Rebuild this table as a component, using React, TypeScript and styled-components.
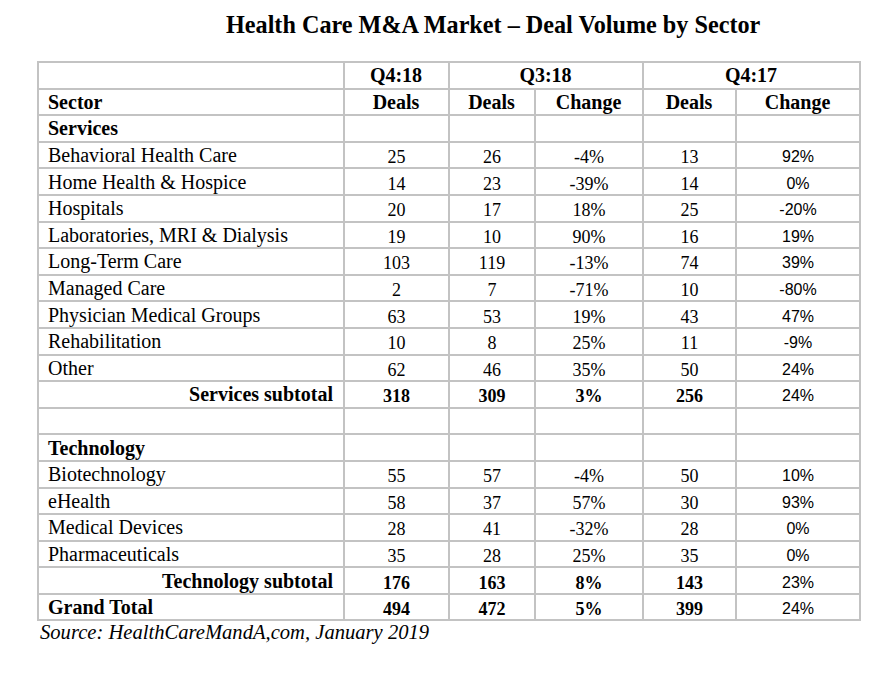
import React from 'react';
import styled, { createGlobalStyle } from 'styled-components';

const GlobalStyle = createGlobalStyle`
  body {
    margin: 0;
    background: #ffffff;
    font-family: "Liberation Serif", "Times New Roman", serif;
    color: #000;
  }
`;

const Page = styled.div`
  width: 882px;
  height: 689px;
  padding: 12px 0 0 37px;
  box-sizing: border-box;
`;

const Title = styled.h1`
  margin: 0 0 23px 189px;
  font-size: 24.2px;
  font-weight: bold;
  line-height: 26px;
  white-space: nowrap;
`;

const Table = styled.table`
  border-collapse: collapse;
  table-layout: fixed;
  width: 822px;
`;

const Row = styled.tr`
  height: 26.6px;
`;

type CellProps = {
  $align?: 'left' | 'center' | 'right';
  $bold?: boolean;
  $num?: boolean;
  $sans?: boolean;
};

const Cell = styled.td<CellProps>`
  border: 2px solid #c3c3c3;
  padding: ${p => (p.$num ? '4px 0 0 0' : '0 10px 0 9px')};
  text-align: ${p => p.$align || 'left'};
  font-weight: ${p => (p.$bold ? 'bold' : 'normal')};
  font-family: ${p => (p.$sans ? '"Liberation Sans", Arial, sans-serif' : 'inherit')};
  font-size: ${p => (p.$sans ? '16px' : p.$num ? '18px' : '20px')};
  line-height: 20px;
  white-space: nowrap;
  vertical-align: middle;
`;

const Source = styled.div`
  margin: 0 0 0 3px;
  font-style: italic;
  font-size: 20.6px;
  line-height: 22px;
`;

type Data = [string, number, number, string, number, string];

const services: Data[] = [
  ['Behavioral Health Care', 25, 26, '-4%', 13, '92%'],
  ['Home Health & Hospice', 14, 23, '-39%', 14, '0%'],
  ['Hospitals', 20, 17, '18%', 25, '-20%'],
  ['Laboratories, MRI & Dialysis', 19, 10, '90%', 16, '19%'],
  ['Long-Term Care', 103, 119, '-13%', 74, '39%'],
  ['Managed Care', 2, 7, '-71%', 10, '-80%'],
  ['Physician Medical Groups', 63, 53, '19%', 43, '47%'],
  ['Rehabilitation', 10, 8, '25%', 11, '-9%'],
  ['Other', 62, 46, '35%', 50, '24%'],
];

const technology: Data[] = [
  ['Biotechnology', 55, 57, '-4%', 50, '10%'],
  ['eHealth', 58, 37, '57%', 30, '93%'],
  ['Medical Devices', 28, 41, '-32%', 28, '0%'],
  ['Pharmaceuticals', 35, 28, '25%', 35, '0%'],
];

const DataRow = ({ d, bold, labelAlign }: { d: Data; bold?: boolean; labelAlign?: 'left' | 'right' }) => (
  <Row>
    <Cell $align={labelAlign} $bold={bold}>{d[0]}</Cell>
    <Cell $num $align="center" $bold={bold}>{d[1]}</Cell>
    <Cell $num $align="center" $bold={bold}>{d[2]}</Cell>
    <Cell $num $align="center" $bold={bold}>{d[3]}</Cell>
    <Cell $num $align="center" $bold={bold}>{d[4]}</Cell>
    <Cell $num $sans $align="center">{d[5]}</Cell>
  </Row>
);

const EmptyRow = ({ label }: { label?: string }) => (
  <Row>
    <Cell $bold>{label}</Cell>
    <Cell />
    <Cell />
    <Cell />
    <Cell />
    <Cell />
  </Row>
);

export default function App() {
  return (
    <Page>
      <GlobalStyle />
      <Title>Health Care M&amp;A Market – Deal Volume by Sector</Title>
      <Table>
        <colgroup>
          <col style={{ width: 306 }} />
          <col style={{ width: 105 }} />
          <col style={{ width: 86 }} />
          <col style={{ width: 108 }} />
          <col style={{ width: 93 }} />
          <col style={{ width: 124 }} />
        </colgroup>
        <tbody>
          <Row>
            <Cell />
            <Cell $bold $align="center">Q4:18</Cell>
            <Cell $bold $align="center" colSpan={2}>Q3:18</Cell>
            <Cell $bold $align="center" colSpan={2}>Q4:17</Cell>
          </Row>
          <Row>
            <Cell $bold>Sector</Cell>
            <Cell $bold $align="center">Deals</Cell>
            <Cell $bold $align="center">Deals</Cell>
            <Cell $bold $align="center">Change</Cell>
            <Cell $bold $align="center">Deals</Cell>
            <Cell $bold $align="center">Change</Cell>
          </Row>
          <EmptyRow label="Services" />
          {services.map(d => <DataRow key={d[0]} d={d} />)}
          <DataRow d={['Services subtotal', 318, 309, '3%', 256, '24%']} bold labelAlign="right" />
          <EmptyRow />
          <EmptyRow label="Technology" />
          {technology.map(d => <DataRow key={d[0]} d={d} />)}
          <DataRow d={['Technology subtotal', 176, 163, '8%', 143, '23%']} bold labelAlign="right" />
          <DataRow d={['Grand Total', 494, 472, '5%', 399, '24%']} bold />
        </tbody>
      </Table>
      <Source>Source: HealthCareMandA,com, January 2019</Source>
    </Page>
  );
}
